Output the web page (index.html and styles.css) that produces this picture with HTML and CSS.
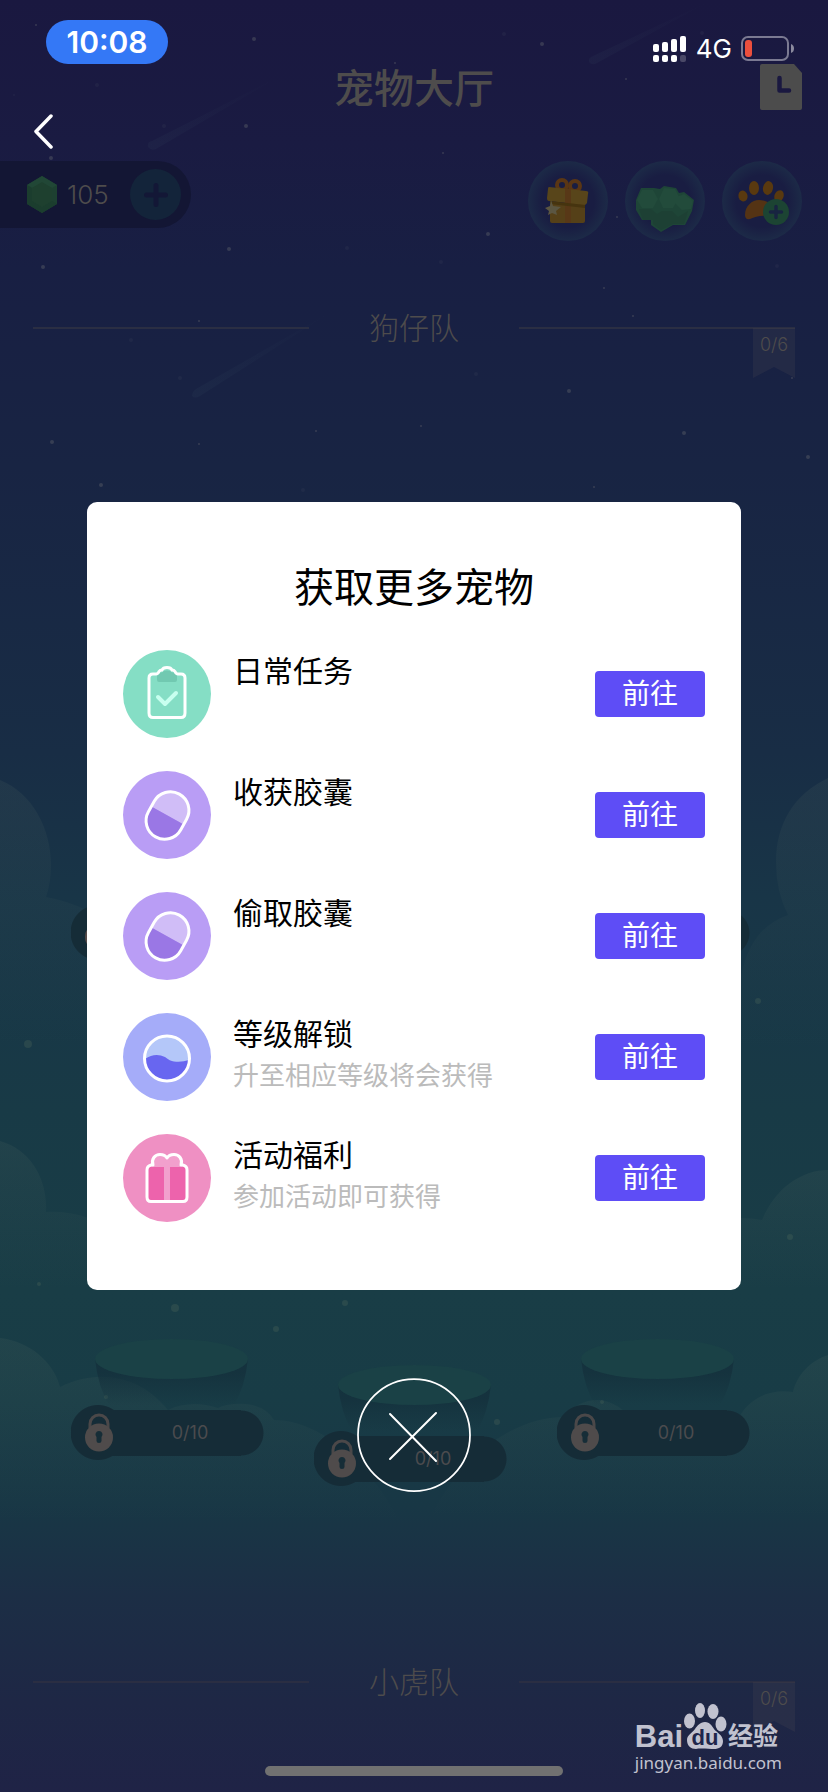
FILE: index.html
```html
<!DOCTYPE html>
<html lang="zh-CN">
<head>
<meta charset="utf-8">
<meta name="viewport" content="width=device-width, initial-scale=1">
<title>宠物大厅</title>
<link rel="stylesheet" href="styles.css">
</head>
<body>
<div class="app">
  <svg class="scene" viewBox="0 0 828 1792" preserveAspectRatio="xMidYMid slice" aria-hidden="true">
    <defs>
      <linearGradient id="cloud" x1="0" y1="0" x2="0" y2="1">
        <stop offset="0" stop-color="#6f8070" stop-opacity=".11"/>
        <stop offset="1" stop-color="#6f8070" stop-opacity="0"/>
      </linearGradient>
      <linearGradient id="meteor" x1="0" y1="1" x2="1" y2="0">
        <stop offset="0" stop-color="#4c6c78" stop-opacity=".08"/>
        <stop offset="1" stop-color="#4c6c78" stop-opacity="0"/>
      </linearGradient>
    </defs>
    <g fill="url(#meteor)">
      <path d="M148 147q-1-5 4-6l130-66-126 74q-5 2-8-2z"/>
      <path d="M589 62q-1-4 4-6L712 0l-115 63q-5 3-8-1z"/>
      <path d="M192 396q0-4 4-7l140-80-136 87q-5 3-8 0z"/>
    </g>
    <g fill="url(#cloud)">
      <path d="M0 780c32 13 51 48 51 85q0 18-5 32c40 8 64 22 90 60v90H0z"/>
      <path d="M828 778c-34 16-52 46-52 84q0 30 12 53c-32 11-48 40-50 90v45h90z"/>
      <path d="M0 1141c30 8 48 38 46 71 24-2 50 6 70 20v58H0z"/>
      <path d="M828 1170c-26 0-53 18-66 50q-20-4-40 0v70h106z"/>
      <path d="M0 1338c29 3 54 24 60 49 40-20 82-10 108 23 14-7 32-8 50-2q10-5 28-4 20 2 28 16c50 0 100 50 126 102H0z"/>
      <path d="M828 1355c-18 6-31 20-35 37-25-4-47 8-57 31q-50-25-101 0-16-21-35-23-22-1-35 17c-60 0-110 50-135 101h398z"/>
    </g>
    <g fill="#5c5f68" opacity=".45">
      <circle cx="36" cy="25" r="1"/><circle cx="254" cy="39" r="2"/><circle cx="246" cy="126" r="2"/><circle cx="395" cy="63" r="1"/>
      <circle cx="51" cy="158" r="2"/><circle cx="542" cy="44" r="2"/><circle cx="626" cy="79" r="1"/><circle cx="443" cy="153" r="1"/>
      <circle cx="617" cy="217" r="1"/><circle cx="488" cy="234" r="2"/><circle cx="43" cy="267" r="2"/><circle cx="229" cy="249" r="2"/>
      <circle cx="83" cy="211" r="1"/><circle cx="604" cy="288" r="1"/><circle cx="199" cy="321" r="1"/><circle cx="633" cy="316" r="1"/>
      <circle cx="569" cy="391" r="2"/><circle cx="316" cy="431" r="1"/><circle cx="421" cy="426" r="1"/><circle cx="684" cy="433" r="2"/>
      <circle cx="52" cy="442" r="2"/><circle cx="199" cy="444" r="1"/><circle cx="808" cy="457" r="2"/><circle cx="101" cy="485" r="2"/>
      <circle cx="594" cy="487" r="1"/><circle cx="638" cy="187" r="1"/><circle cx="792" cy="378" r="1"/>
    </g>
    <g fill="#5d7260" opacity=".25">
      <circle cx="28" cy="1044" r="4"/><circle cx="758" cy="1001" r="3"/><circle cx="790" cy="1237" r="3"/><circle cx="39" cy="1284" r="2"/>
      <circle cx="175" cy="1308" r="4"/><circle cx="276" cy="1329" r="3"/><circle cx="345" cy="1303" r="3"/><circle cx="497" cy="1422" r="3"/>
      <circle cx="602" cy="1402" r="2"/><circle cx="106" cy="1397" r="2"/>
    </g>
    <g fill="#40465e" opacity=".2">
      <circle cx="97" cy="85" r="2"/><circle cx="14" cy="95" r="1"/><circle cx="164" cy="126" r="2"/><circle cx="504" cy="34" r="2"/>
      <circle cx="702" cy="33" r="2"/><circle cx="441" cy="262" r="2"/><circle cx="476" cy="374" r="2"/><circle cx="777" cy="266" r="2"/>
      <circle cx="347" cy="248" r="2"/><circle cx="131" cy="340" r="2"/><circle cx="180" cy="378" r="2"/><circle cx="303" cy="490" r="2"/>
    </g>
  </svg>

  <main class="page">
    <div class="status">
      <span class="clock">10:08</span>
      <div class="status-right">
        <svg width="34" height="26" viewBox="0 0 34 26" role="img" aria-label="信号">
          <g fill="#fff"><rect y="8" width="6" height="8" rx="2"/><rect x="9" y="6" width="6" height="10" rx="2"/><rect x="18" y="3" width="6" height="13" rx="2"/><rect x="27" width="6" height="16" rx="2"/><rect y="19" width="6" height="7" rx="2"/><rect x="9" y="19" width="6" height="7" rx="2"/><rect x="18" y="19" width="6" height="7" rx="2"/></g>
          <rect x="27" y="19" width="6" height="7" rx="2" fill="#4a4967"/>
        </svg>
        <span class="network">4G</span>
        <svg width="54" height="26" viewBox="0 0 54 26" role="img" aria-label="电量低">
          <rect x="1" y="1" width="46" height="23" rx="6" fill="none" stroke="#7b7a92" stroke-width="2"/>
          <rect x="4" y="4" width="7" height="17" rx="3" fill="#ec4f3d"/>
          <path d="M50 8q3 1 3 4.500t-3 4.500z" fill="#8b8a9e"/>
        </svg>
      </div>
    </div>

    <header class="nav">
      <button class="back" aria-label="返回">
        <svg width="20" height="36" viewBox="0 0 20 36"><path d="M17 2 2 17.500 17 33" fill="none" stroke="#fff" stroke-width="3.500" stroke-linecap="round" stroke-linejoin="round"/></svg>
      </button>
      <h1 class="nav-title">宠物大厅</h1>
      <button class="record" aria-label="记录">
        <svg width="42" height="46" viewBox="0 0 42 46"><path d="M2 0h32l8 9v35q0 2-2 2H2q-2 0-2-2V2q0-2 2-2z" fill="#4c4c4c"/><path d="M19.500 14v12.500H29" fill="none" stroke="#1a1840" stroke-width="4.500" stroke-linecap="round" stroke-linejoin="round"/></svg>
      </button>
    </header>

    <div class="assets">
      <div class="balance">
        <svg width="30" height="37" viewBox="0 0 30 37" aria-hidden="true">
          <path d="M15 0 30 9v19l-15 9L0 28V9z" fill="#1d4031"/>
          <path d="M15 0 30 9l-5 3-10-5-10 5-5-3z" fill="#214736"/>
          <path d="M5 12v13l10 6 10-6 5 3-15 9-15-9V9z" fill="#1b3d2e"/>
          <path d="M15 6l10 6v13l-10 6-10-6V12z" fill="#1e402f"/>
        </svg>
        <span class="amount">105</span>
        <button class="add" aria-label="充值">
          <svg width="24" height="24" viewBox="0 0 24 24"><path d="M12 2.500v19M2.500 12h19" stroke="#131736" stroke-width="5" stroke-linecap="round"/></svg>
        </button>
      </div>
      <div class="shortcuts">
        <button class="bubble" aria-label="礼物">
          <svg width="80" height="80" viewBox="0 0 80 80">
            <g fill="none" stroke="#5a3614" stroke-width="4"><circle cx="34" cy="24" r="5"/><circle cx="47" cy="25" r="5"/></g>
            <path d="M22 42h35v18q0 2-2 2H24q-2 0-2-2z" fill="#554018"/>
            <path d="M21 26 58 30q3 0 2 3l-1 9q-1 2-3 2L21 40q-2 0-2-3l1-9q0-2 1-2z" fill="#58451a"/>
            <path d="M37 27l6 1v34h-6z" fill="#583817"/>
            <path d="M22 40l35 4v3l-35-4z" fill="#46340f"/>
            <path d="M23 39l2 6 8 1-5 4 1 4-5-2-4 2 1-4-4-3 5-2z" fill="#5b5642"/>
          </svg>
        </button>
        <button class="bubble" aria-label="宝石">
          <svg width="80" height="80" viewBox="0 0 80 80">
            <path d="M16 27h13l6 1 4-3 12 2 3 5 5-1 10 8-2 11-7 14H48l-12 7-10-7v-5H17l-6-10V39z" fill="#1e4537"/>
            <path d="M17 29h11l5 9-5 9H17l-5-8zM39 27l11 1 4 8-6 11H38l-4-9zM59 33l9 7-2 8-9 1-7-7 2-6z" fill="#224b3b"/>
            <path d="M14 48h12l6 5 5-3h10l6 6 10-6-4 13H48l-12 6-8-6v-4H18z" fill="#1d4034"/>
          </svg>
        </button>
        <button class="bubble" aria-label="添加宠物">
          <svg width="80" height="80" viewBox="0 0 80 80">
            <g fill="#59390f"><ellipse cx="21" cy="35" rx="4.500" ry="5.500" transform="rotate(-15 21 35)"/><ellipse cx="32" cy="27" rx="5" ry="7"/><ellipse cx="46" cy="27" rx="5" ry="7" transform="rotate(12 46 27)"/><ellipse cx="57" cy="35" rx="4.500" ry="6" transform="rotate(25 57 35)"/></g>
            <path d="M23 54c0-9 7-15 14-15s14 4 17 13v5c-12-4-19-2-26 1q-5 1-5-4z" fill="#543314"/>
            <circle cx="54" cy="51" r="13" fill="#1c4433"/>
            <path d="M54 45.500v11M48.500 51h11" stroke="#182441" stroke-width="3.500" stroke-linecap="round"/>
          </svg>
        </button>
      </div>
    </div>

    <div class="team team-first">
      <span class="rule"></span><h2 class="team-name">狗仔队</h2><span class="rule"></span>
      <span class="ribbon">0/6</span>
    </div>

    <div class="pets pets-upper">
      <div class="slot">
        <span class="lock"><svg width="28" height="39" viewBox="0 0 28 39" aria-hidden="true"><path d="M5 14V11a9 9 0 0 1 18 0v3" fill="none" stroke="#554a48" stroke-width="3"/><circle cx="14" cy="24" r="14" fill="#554a48"/></svg></span>
      </div>
      <div class="slot slot-last"></div>
    </div>

    <div class="pets pets-lower">
      <div class="pet">
        <svg class="pedestal" width="153" height="66" viewBox="0 0 153 66" aria-hidden="true"><use href="#bowl"/></svg>
        <div class="slot"><span class="lock"><svg width="28" height="39" viewBox="0 0 28 39" aria-hidden="true"><use href="#padlock"/></svg></span><span class="count">0/10</span></div>
      </div>
      <div class="pet pet-middle">
        <svg class="pedestal" width="153" height="66" viewBox="0 0 153 66" aria-hidden="true"><use href="#bowl"/></svg>
        <div class="slot"><span class="lock"><svg width="28" height="39" viewBox="0 0 28 39" aria-hidden="true"><use href="#padlock"/></svg></span><span class="count">0/10</span></div>
      </div>
      <div class="pet">
        <svg class="pedestal" width="153" height="66" viewBox="0 0 153 66" aria-hidden="true"><use href="#bowl"/></svg>
        <div class="slot"><span class="lock"><svg width="28" height="39" viewBox="0 0 28 39" aria-hidden="true"><use href="#padlock"/></svg></span><span class="count">0/10</span></div>
      </div>
    </div>

    <div class="team team-second">
      <span class="rule"></span><h2 class="team-name">小虎队</h2><span class="rule"></span>
      <span class="ribbon">0/6</span>
    </div>

    <div class="home-bar"></div>
  </main>

  <div class="overlay">
    <section class="dialog" role="dialog" aria-labelledby="dialog-title">
      <h2 class="dialog-title" id="dialog-title">获取更多宠物</h2>
      <ul class="tasks">
        <li class="task">
          <svg class="task-icon" viewBox="0 0 88 88" aria-hidden="true">
            <circle cx="44" cy="44" r="44" fill="#85dec5"/>
            <path d="M34 24.500q0-1.500 2-2h3q1-2 5-2t5 2h3q2 .5 2 2v5.500q0 2-2 2H36q-2 0-2-2z" fill="#71c9b1"/>
            <path d="M36 21.500q1-1.500 3-1.500 1-2.500 5-2.500t5 2.500q2 0 3 1.500 1 2.500 3 2.500h3q4 0 4 4v35q0 4.500-4 4.500H30q-4 0-4-4.500V28q0-4 4-4h3q2 0 3-2.500z" fill="none" stroke="#fff" stroke-width="3"/>
            <path d="M35 47l7 7 11-11" fill="none" stroke="#c8ffef" stroke-width="4" stroke-linecap="round" stroke-linejoin="round"/>
          </svg>
          <div class="task-text"><h3 class="task-name">日常任务</h3></div>
          <button class="go">前往</button>
        </li>
        <li class="task">
          <svg class="task-icon" viewBox="0 0 88 88" aria-hidden="true"><use href="#capsule"/></svg>
          <div class="task-text"><h3 class="task-name">收获胶囊</h3></div>
          <button class="go">前往</button>
        </li>
        <li class="task">
          <svg class="task-icon" viewBox="0 0 88 88" aria-hidden="true"><use href="#capsule"/></svg>
          <div class="task-text"><h3 class="task-name">偷取胶囊</h3></div>
          <button class="go">前往</button>
        </li>
        <li class="task">
          <svg class="task-icon" viewBox="0 0 88 88" aria-hidden="true">
            <circle cx="44" cy="44" r="44" fill="#a5acf9"/>
            <circle cx="44" cy="45.500" r="22.500" fill="#b4c7f9"/>
            <path d="M22 46q10-7 20-2 5 4 9 4.500 8 1 15-1.500a22 22 0 0 1-44-1z" fill="#6866f0"/>
            <circle cx="44" cy="45.500" r="22.500" fill="none" stroke="#fff" stroke-width="3"/>
          </svg>
          <div class="task-text"><h3 class="task-name">等级解锁</h3><p class="task-note">升至相应等级将会获得</p></div>
          <button class="go">前往</button>
        </li>
        <li class="task">
          <svg class="task-icon" viewBox="0 0 88 88" aria-hidden="true">
            <circle cx="44" cy="44" r="44" fill="#ef90c3"/>
            <path d="M31 33c-3-7 2-12 7-12q4 0 6 3 2-3 6-3c5 0 10 5 7 12z" fill="#f2a0cd"/>
            <path d="M25 33h38v33H25z" fill="#ed63ac"/>
            <path d="M41 33h6v33h-6z" fill="#f2a0cd"/>
            <path d="M30 31c-2-6 2-10.500 7-10.500q5 0 7 3.500 2-3.500 7-3.500c5 0 9 4.500 7 10.500h2q4 1 4 5v27q0 4.500-4 4.500H28q-4 0-4-4.500V36q0-4 4-5z" fill="none" stroke="#fff" stroke-width="3" stroke-linejoin="round"/>
          </svg>
          <div class="task-text"><h3 class="task-name">活动福利</h3><p class="task-note">参加活动即可获得</p></div>
          <button class="go">前往</button>
        </li>
      </ul>
    </section>
    <button class="close" aria-label="关闭">
      <svg width="114" height="114" viewBox="0 0 114 114"><g fill="none" stroke="#fff" stroke-linecap="round"><circle cx="57" cy="57" r="56" stroke-width="1.750"/><path d="M33 36l46 47M79 35 33 81" stroke-width="2"/></g></svg>
    </button>
  </div>

  <div class="watermark">
    <div class="brand">
      <span class="brand-bai">Bai</span>
      <svg width="43" height="47" viewBox="0 0 43 47" aria-hidden="true">
        <g fill="#c1c2cf"><ellipse cx="5.500" cy="18" rx="5.500" ry="7.500"/><ellipse cx="16" cy="7.500" rx="5" ry="7.500"/><ellipse cx="29" cy="8.500" rx="5.500" ry="7.500"/><ellipse cx="37" cy="21" rx="5.500" ry="7.500"/>
        <path d="M21 19c5 0 7 4 9 7s9 6 9 12-4 8-9 8c-4 0-14-1-18 0-5 0-9-3-9-9 0-5 5-7 8-11 2-3 5-7 10-7z"/></g>
        <text class="brand-du" x="21" y="42" text-anchor="middle">du</text>
      </svg>
      <span class="brand-cn">经验</span>
    </div>
    <div class="brand-url">jingyan.baidu.com</div>
  </div>
</div>

<svg class="symbols" width="0" height="0" aria-hidden="true">
  <defs>
    <linearGradient id="bowl-side" x1="0" y1="0" x2="0" y2="1">
      <stop offset=".3" stop-color="#14303c" stop-opacity=".8"/><stop offset="1" stop-color="#14303c" stop-opacity="0"/>
    </linearGradient>
    <g id="bowl"><path d="M0 20q3 28 14 46h125q11-18 14-46z" fill="url(#bowl-side)"/><ellipse cx="76.500" cy="20" rx="76.500" ry="20" fill="#1a4146"/></g>
    <g id="padlock">
      <path d="M5 15V11a9 9 0 0 1 18 0v4" fill="none" stroke="#4b4849" stroke-width="3"/>
      <circle cx="14" cy="24.500" r="14" fill="#4f4b4b"/>
      <path d="M14 18a3.500 3.500 0 0 1 2.500 6v4q0 2-2.500 2t-2.500-2v-4A3.500 3.500 0 0 1 14 18z" fill="#162d37"/>
    </g>
    <g id="capsule">
      <circle cx="44" cy="44" r="44" fill="#b99df5"/>
      <g transform="rotate(29 44.500 44.500)">
        <path d="M26 44.500V38.500a18.500 18.500 0 0 1 37 0v6z" fill="#d0bdf7"/>
        <path d="M26 44.500v6a18.500 18.500 0 0 0 37 0v-6z" fill="#9a77e5"/>
        <rect x="26" y="20" width="37" height="49" rx="18.500" fill="none" stroke="#fff" stroke-width="3"/>
      </g>
    </g>
  </defs>
</svg>
</body>
</html>
```

FILE: styles.css
```css
* {
  box-sizing: border-box;
}

body {
  margin: 0;
  font-family: Inter, "Noto Sans CJK SC", sans-serif;
  background: #1f2447;
}

h1, h2, h3, p, ul {
  margin: 0;
  padding: 0;
  font-weight: 400;
}

button {
  display: grid;
  place-items: center;
  padding: 0;
  border: 0;
  background: none;
  font: inherit;
  cursor: pointer;
}

svg {
  display: block;
  flex: none;
}

.symbols {
  position: absolute;
}

.app {
  position: relative;
  min-height: 100vh;
  background: linear-gradient(#1a1840 0%, #1a1b42 8%, #181f43 15%, #182443 26%, #182d45 42%, #183547 50%, #183a46 62%, #193d46 72%, #183c46 78%, #183745 84%, #1c2e45 89%, #1e2745 95%, #1f2346 100%);
}

.scene {
  position: absolute;
  inset: 0;
  width: 100%;
  height: 100%;
}

.page {
  position: relative;
  display: flex;
  flex-direction: column;
  min-height: 100vh;
  color: #4e4c4c;
}

/* Status bar and navigation */
.status {
  display: flex;
  justify-content: space-between;
  height: 64px;
  padding: 20px 33px 0 46px;
}

.clock {
  width: 122px;
  border-radius: 22px;
  background: #3478f6;
  color: #fff;
  font-size: 30px;
  font-weight: 600;
  line-height: 44px;
  text-align: center;
}

.status-right {
  display: flex;
  align-items: center;
  gap: 9px;
  height: 58px;
}

.network {
  color: #fff;
  font-size: 26px;
  font-weight: 400;
  line-height: 28px;
}

.nav {
  display: grid;
  grid-template-columns: 1fr auto 1fr;
  height: 86px;
  padding: 0 26px;
}

.back {
  align-self: end;
  justify-self: start;
  padding-left: 8px;
}

.nav-title {
  font-size: 40px;
  font-weight: 500;
  line-height: 50px;
}

.record {
  align-self: start;
  justify-self: end;
}

/* Balance and shortcuts */
.assets {
  display: flex;
  justify-content: space-between;
  align-items: flex-start;
  margin-top: 11px;
  padding-right: 26px;
}

.balance {
  display: flex;
  align-items: center;
  width: 191px;
  height: 67px;
  padding: 0 10px 0 27px;
  border-radius: 0 34px 34px 0;
  background: #131634;
}

.amount {
  margin-left: 10px;
  font-size: 26px;
  font-weight: 300;
}

.add {
  width: 51px;
  height: 51px;
  margin-left: auto;
  border-radius: 50%;
  background: #13243a;
}

.shortcuts {
  display: flex;
  gap: 17px;
}

.bubble {
  width: 80px;
  height: 80px;
  border-radius: 50%;
  background: radial-gradient(circle closest-side, #191d42 65%, #1c2a47 100%);
}

/* Team headings */
.team {
  position: relative;
  display: grid;
  grid-template-columns: 1fr 210px 1fr;
  align-items: center;
  padding: 0 33px;
}

.team-first {
  margin-top: 65px;
}

.team-second {
  margin-top: 174px;
}

.rule {
  height: 2px;
  background: #2a2e43;
}

.team-name {
  font-size: 30px;
  font-weight: 300;
  line-height: 44px;
  text-align: center;
}

.ribbon {
  position: absolute;
  top: 50%;
  right: 33px;
  width: 42px;
  height: 50px;
  background: rgba(90, 85, 90, .18);
  clip-path: polygon(0 0, 100% 0, 100% 100%, 50% 78%, 0 100%);
  font-size: 18px;
  font-weight: 300;
  line-height: 34px;
  text-align: center;
}

/* Pet places */
.pets {
  display: grid;
  grid-template-columns: repeat(3, 1fr);
  gap: 50px;
  padding: 0 78px 0 71px;
}

.pets-upper {
  margin-top: 555px;
}

.pets-lower {
  margin-top: 379px;
}

.pet-middle {
  padding-top: 26px;
}

.pedestal {
  margin: 0 auto 0 24px;
}

.slot {
  display: flex;
  align-items: center;
  height: 55px;
  background: linear-gradient(#152c37, #152c37) 27px 5px / calc(100% - 50px) 46px no-repeat,
    radial-gradient(circle at 27px 50%, #152c37 27px, transparent 28px),
    radial-gradient(circle at calc(100% - 23px) 28px, #152c37 22px, transparent 23px);
}

.slot-last {
  grid-column: 3;
}

.lock {
  display: grid;
  place-items: center;
  width: 55px;
}

.count {
  flex: 1;
  padding-right: 10px;
  color: #4b4b4e;
  font-size: 18px;
  line-height: 20px;
  text-align: center;
}

.home-bar {
  width: 36%;
  height: 10px;
  margin: auto auto 16px;
  border-radius: 5px;
  background: #717171;
}

/* Dialog */
.overlay {
  position: absolute;
  inset: 0;
  display: flex;
  flex-direction: column;
  align-items: center;
  gap: 88px;
  padding: 502px 87px 0;
}

.dialog {
  width: 100%;
  padding: 56px 36px 68px;
  border-radius: 10px;
  background: #fff;
  color: #000;
}

.dialog-title {
  font-size: 40px;
  line-height: 60px;
  text-align: center;
}

.tasks {
  display: grid;
  gap: 33px;
  margin-top: 32px;
  list-style: none;
}

.task {
  display: flex;
  align-items: center;
}

.task-icon {
  width: 88px;
  height: 88px;
}

.task-text {
  flex: 1;
  align-self: flex-start;
  padding-left: 22px;
}

.task-name {
  font-size: 30px;
  line-height: 42px;
}

.task-note {
  color: #bbb;
  font-size: 26px;
  line-height: 42px;
}

.go {
  width: 110px;
  height: 46px;
  border-radius: 4px;
  background: #5e4df6;
  color: #fff;
  font-size: 28px;
  line-height: 46px;
}

.close {
  border-radius: 50%;
}

/* Watermark */
.watermark {
  position: absolute;
  right: 46px;
  bottom: 16px;
  color: #c1c2cf;
}

.brand {
  display: flex;
  align-items: flex-end;
  gap: 1px;
  font-weight: 700;
}

.brand-bai {
  font-family: "Liberation Sans", sans-serif;
  font-size: 31px;
  line-height: 26px;
}

.brand-du {
  fill: #20264a;
  font-family: "Liberation Sans", sans-serif;
  font-size: 22px;
}

.brand-cn {
  font-size: 25px;
  line-height: 28px;
}

.brand-url {
  font-family: "Noto Sans", sans-serif;
  font-size: 17px;
  line-height: 26px;
}
```
